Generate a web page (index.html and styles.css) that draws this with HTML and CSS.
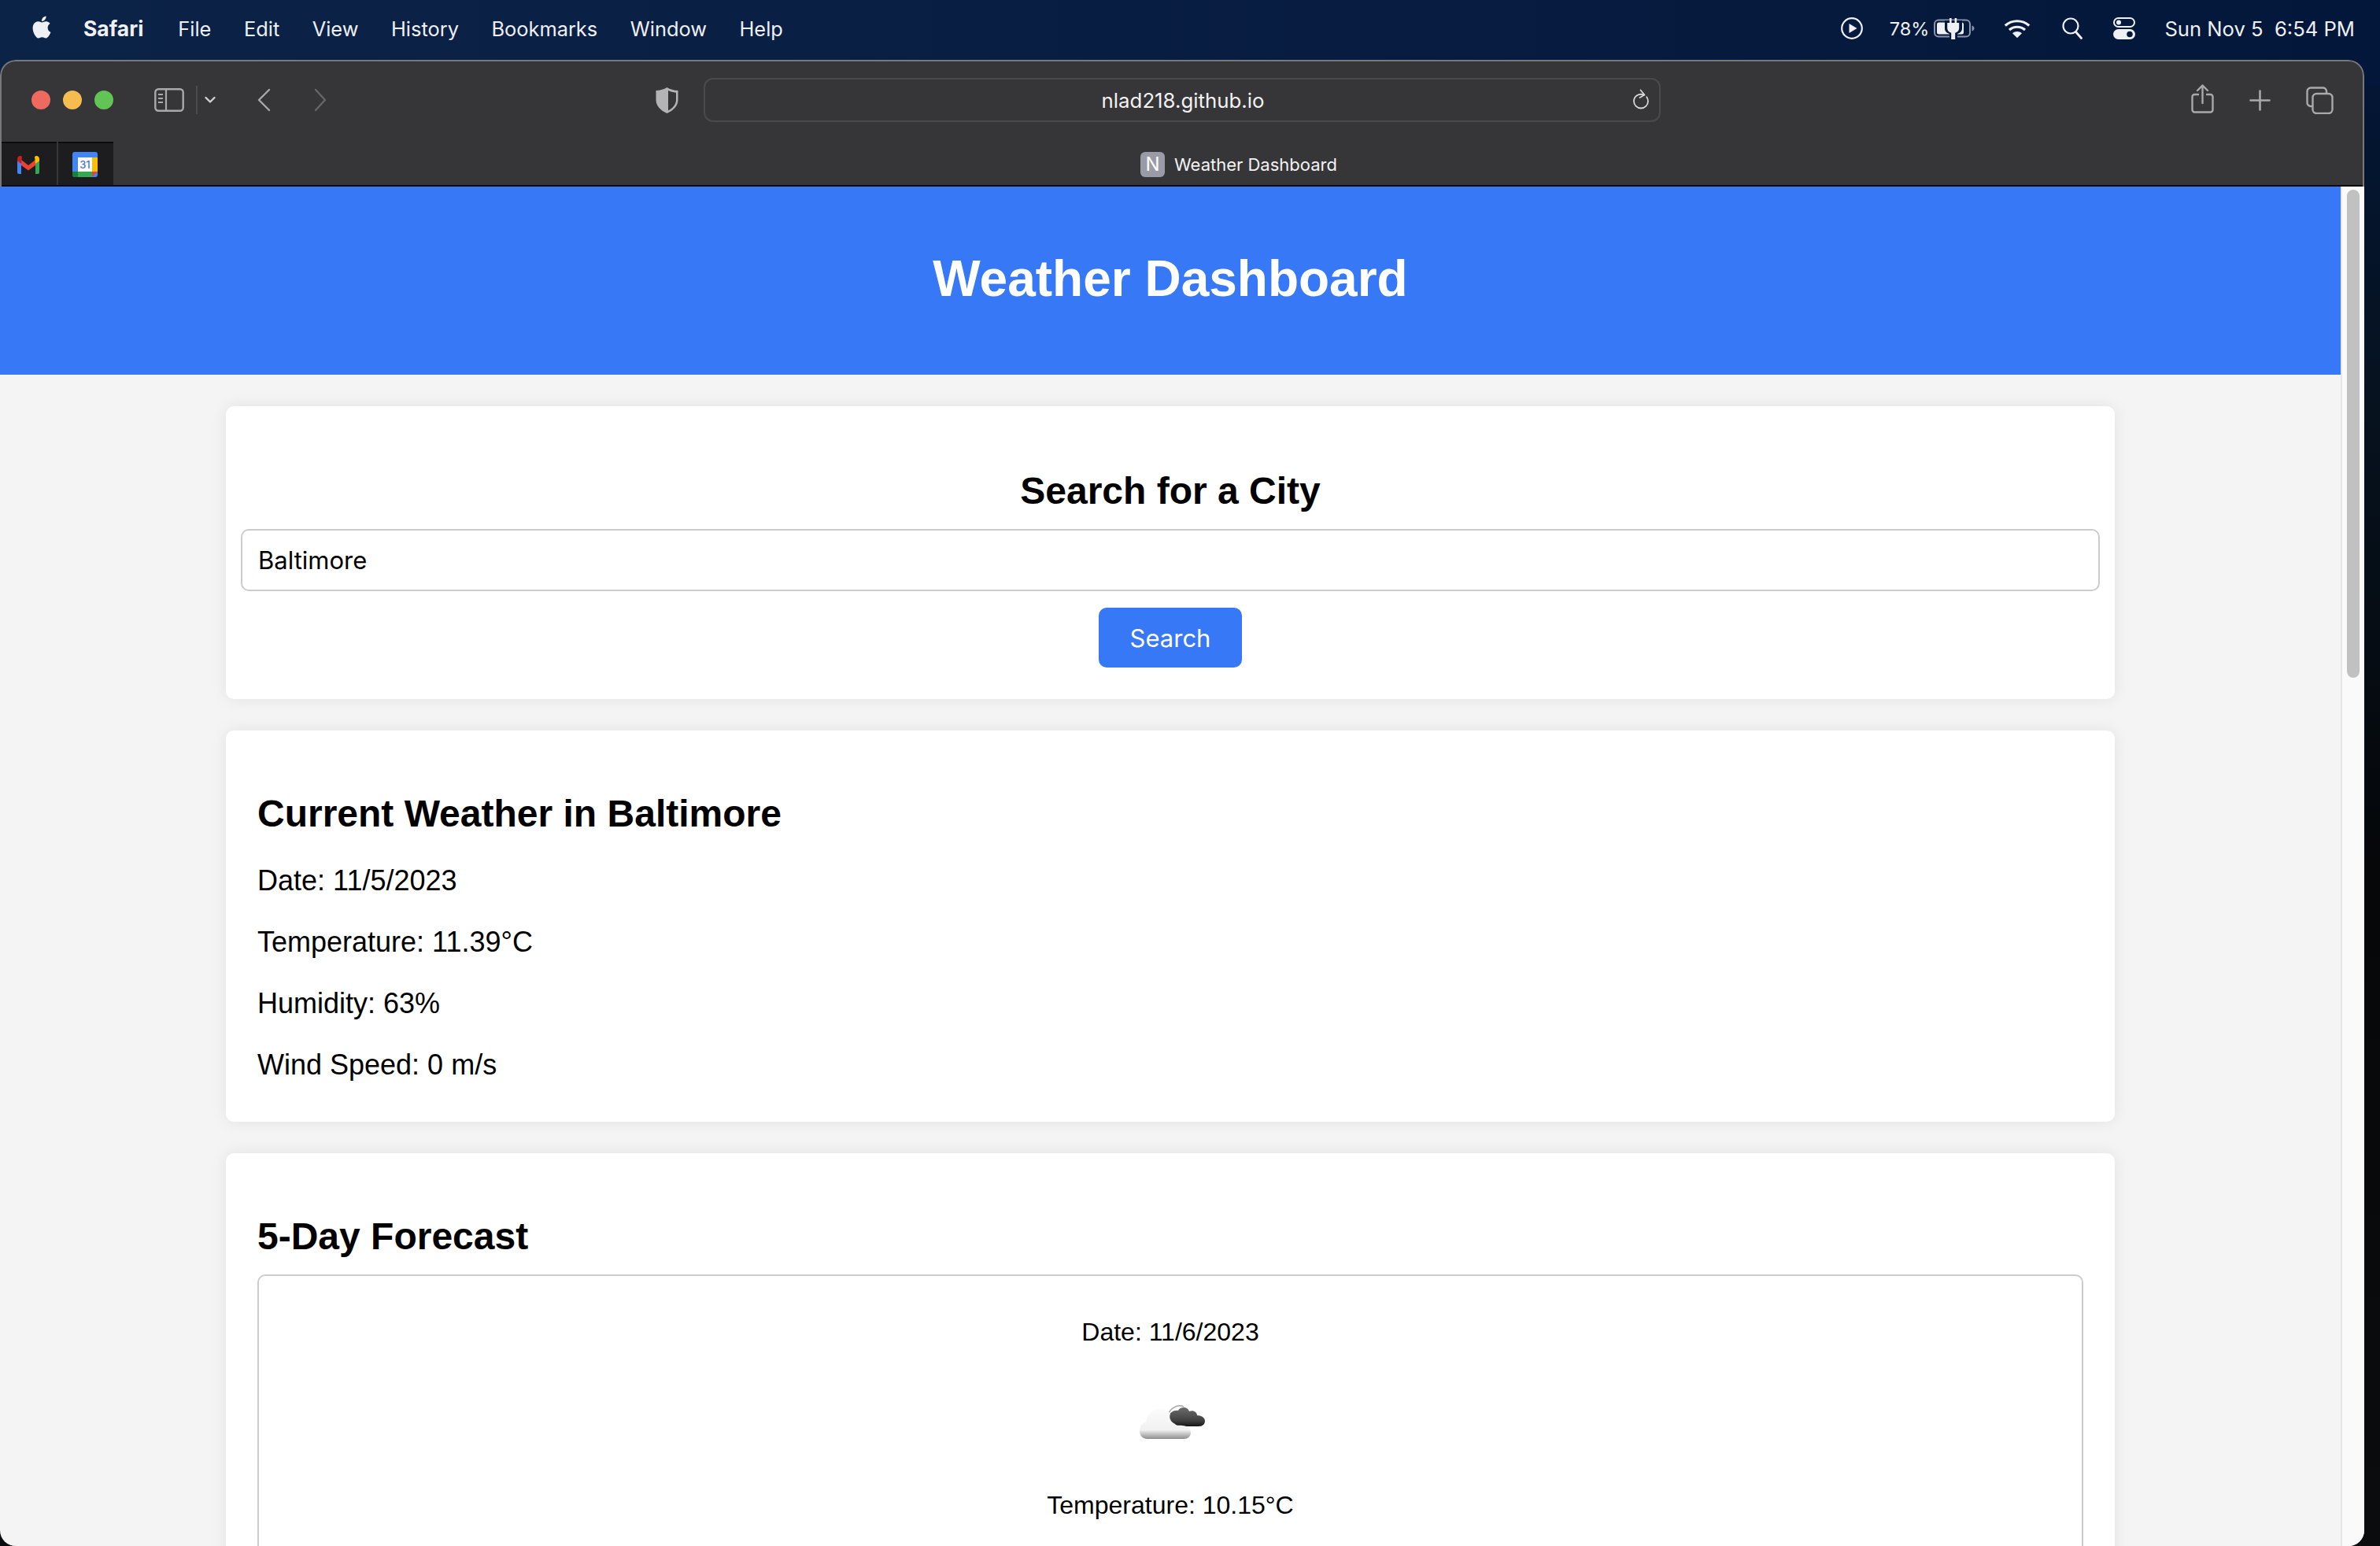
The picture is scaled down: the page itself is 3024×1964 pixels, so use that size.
FILE: index.html

```html
<!DOCTYPE html>
<html lang="en">
<head>
  <meta charset="UTF-8" />
  <title>Weather Dashboard</title>
  <link rel="stylesheet" href="styles.css">
</head>
<body>
  <!-- mac menu bar -->
  <div class="menubar">
    <svg class="apple" viewBox="0 0 24 24"><path fill="#eef0f4" d="M12.152 6.896c-.948 0-2.415-1.078-3.96-1.04-2.04.027-3.91 1.183-4.961 3.014-2.117 3.675-.546 9.103 1.519 12.09 1.013 1.454 2.208 3.09 3.792 3.039 1.52-.065 2.09-.987 3.935-.987 1.831 0 2.35.987 3.96.948 1.637-.026 2.676-1.48 3.676-2.948 1.156-1.688 1.636-3.325 1.662-3.415-.039-.013-3.182-1.221-3.22-4.857-.026-3.04 2.48-4.494 2.597-4.559-1.429-2.09-3.623-2.324-4.39-2.376-2-.156-3.675 1.09-4.61 1.09zM15.53 3.83c.843-1.012 1.4-2.427 1.245-3.83-1.207.052-2.662.805-3.532 1.818-.78.896-1.454 2.338-1.273 3.714 1.338.104 2.715-.688 3.559-1.701"/></svg>
    <span class="menu-item menu-app">Safari</span>
    <span class="menu-item menu-first">File</span>
    <span class="menu-item">Edit</span>
    <span class="menu-item">View</span>
    <span class="menu-item">History</span>
    <span class="menu-item">Bookmarks</span>
    <span class="menu-item">Window</span>
    <span class="menu-item">Help</span>

    <div class="status">
      <svg class="st-play" viewBox="0 0 28 28"><circle cx="14" cy="14" r="12.8" fill="none" stroke="#eef0f4" stroke-width="2.2"/><path fill="#eef0f4" d="M10.5 8l10 6-10 6z"/></svg>
      <span class="st-batt-text">78%</span>
      <svg class="st-batt" viewBox="0 0 52 28"><rect x="1" y="3.5" width="45" height="21" rx="5" fill="none" stroke="#8b94a8" stroke-width="2"/><rect x="4" y="6.5" width="34" height="15" rx="2.5" fill="#eef0f4"/><path fill="#8b94a8" d="M48.5 10.5c2 .6 3 2 3 3.5s-1 2.900-3 3.500z"/><path fill="#03173a" d="M14 4h22v10c0 4-3 6-6 7v6h-10v-6c-3-1-6-3-6-7z"/><path fill="#eef0f4" d="M20 1h2.600v6h4V1h2.600v6h3v7c0 3-2.400 5-5 5.800V28h-5v-8.200c-2.600-.8-5-2.800-5-5.800V7h3z"/></svg>
      <svg class="st-wifi" viewBox="0 0 34 24"><path fill="none" stroke="#eef0f4" stroke-width="3.200" d="M1.800 8.500C10.500.8 23.500.8 32.200 8.500M7 14c5.800-5 14.200-5 20 0"/><path fill="#eef0f4" d="M11 18.200c3.500-2.800 8.500-2.800 12 0l-6 6z"/></svg>
      <svg class="st-search" viewBox="0 0 26 28"><circle cx="11" cy="11" r="9.500" fill="none" stroke="#eef0f4" stroke-width="2.200"/><path stroke="#eef0f4" stroke-width="2.800" stroke-linecap="round" d="M17.500 18.500l7 8"/></svg>
      <svg class="st-control" viewBox="0 0 28 28"><rect x="1" y="1" width="26" height="11" rx="5.500" fill="none" stroke="#eef0f4" stroke-width="2"/><circle cx="7" cy="6.500" r="3" fill="#eef0f4"/><rect y="15" width="28" height="13" rx="6.500" fill="#eef0f4"/><circle cx="21" cy="21.500" r="3.800" fill="#03173a"/></svg>
      <span class="clock">Sun Nov 5&nbsp;&nbsp;6:54 PM</span>
    </div>
  </div>

  <div class="window">
    <div class="chrome">
      <div class="toolbar">
        <span class="light light-red"></span>
        <span class="light light-yellow"></span>
        <span class="light light-green"></span>

        <svg class="tb-sidebar" viewBox="0 0 38 30"><rect x="1.300" y="1.300" width="35.400" height="27.400" rx="4" fill="none" stroke="#a9a9ab" stroke-width="2.400"/><path stroke="#a9a9ab" stroke-width="2.200" d="M15 1.500v27M5 8h6M5 13h6M5 18h6"/></svg>
        <span class="tb-divider"></span>
        <svg class="tb-chevron" viewBox="0 0 14 10"><path fill="none" stroke="#d0d0d2" stroke-width="2.400" stroke-linecap="round" stroke-linejoin="round" d="M1.500 2l5.500 5.500L12.500 2"/></svg>
        <svg class="tb-back" viewBox="0 0 19 30"><path fill="none" stroke="#a9a9ab" stroke-width="2.400" stroke-linecap="round" stroke-linejoin="round" d="M16 2L3 15l13 13"/></svg>
        <svg class="tb-forward" viewBox="0 0 18 30"><path fill="none" stroke="#66666a" stroke-width="2.400" stroke-linecap="round" stroke-linejoin="round" d="M3 2l12 13L3 28"/></svg>
        <svg class="tb-shield" viewBox="0 0 29 33"><path fill="#b4b4b6" d="M14.500 0c4 2.500 8.500 3.800 14 4v12c0 7.500-6 13.500-14 17-8-3.500-14-9.500-14-17V4c5.500-.2 10-1.500 14-4z"/><path fill="#363638" d="M16 4c3 1.500 6 2.300 10 2.700V16c0 5.800-4.300 10.500-10 13.500z"/></svg>

        <div class="address">
          <span class="address-text">nlad218.github.io</span>
          <svg class="tb-reload" viewBox="0 0 22 27"><path fill="none" stroke="#d6d6d8" stroke-width="1.800" stroke-linecap="round" d="M15 7.500c-7-2.500-13 2-13 8 0 5 4 9 9 9s9-4 9-9c0-2-.7-3.800-1.800-5.200"/><path fill="none" stroke="#d6d6d8" stroke-width="1.800" stroke-linecap="round" stroke-linejoin="round" d="M10.500 1.500l5 6-6 3.500"/></svg>
        </div>

        <svg class="tb-share" viewBox="0 0 29 37"><path fill="none" stroke="#a9a9ab" stroke-width="2.400" stroke-linecap="round" stroke-linejoin="round" d="M9 13H4.500a3 3 0 0 0-3 3v16.500a3 3 0 0 0 3 3h20a3 3 0 0 0 3-3V16a3 3 0 0 0-3-3H20M14.500 24V1.500M8 8l6.500-6.500L21 8"/></svg>
        <svg class="tb-plus" viewBox="0 0 27 27"><path stroke="#a9a9ab" stroke-width="2.600" stroke-linecap="round" d="M13.500 1.500v24M1.500 13.500h24"/></svg>
        <svg class="tb-tabs" viewBox="0 0 35 35"><rect x="8.500" y="9" width="25" height="25" rx="5" fill="none" stroke="#a9a9ab" stroke-width="2.400"/><path fill="none" stroke="#a9a9ab" stroke-width="2.400" d="M8 25H6a4.500 4.500 0 0 1-4.500-4.500V6A4.500 4.500 0 0 1 6 1.500h15A4.500 4.500 0 0 1 26 6v2.500"/></svg>
      </div>

      <div class="tabbar">
        <div class="pinned">
          <svg class="pin-icon" viewBox="0 0 30 24"><path fill="#4285f4" d="M1 5h5v19H3a2 2 0 0 1-2-2z"/><path fill="#34a853" d="M24 5h5v17a2 2 0 0 1-2 2h-3z"/><path fill="#ea4335" d="M6 6l9 7 9-7v7l-9 6.500L6 13z"/><path fill="#c5221f" d="M1 5c0-4 4-5 6-3l-1 9-5-3.500z"/><path fill="#fbbc04" d="M29 5c0-4-4-5-6-3l1 9 5-3.500z"/></svg>
        </div>
        <div class="pinned">
          <svg class="pin-icon pin-cal" viewBox="0 0 32 32"><rect width="32" height="32" rx="3" fill="#4285f4"/><path fill="#fbbc04" d="M25 7h7v18h-7z"/><path fill="#34a853" d="M7 25h18v7H7z"/><path fill="#188038" d="M0 25h7v7H3a3 3 0 0 1-3-3z"/><path fill="#ea4335" d="M25 25h7l-7 7z"/><rect x="7" y="7" width="18" height="18" fill="#fff"/><text class="cal-num" x="16" y="21">31</text></svg>
        </div>
        <div class="tab-title">
          <span class="favicon">N</span>
          <span>Weather Dashboard</span>
        </div>
      </div>
    </div>

    <div class="viewport">
      <div class="page">
        <header class="page-header">
          <h1>Weather Dashboard</h1>
        </header>

        <main class="container">
          <section class="card card-search">
            <h2>Search for a City</h2>
            <input class="city-input" type="text" value="Baltimore">
            <button class="search-btn">Search</button>
          </section>

          <section class="card card-current">
            <h2>Current Weather in Baltimore</h2>
            <p>Date: 11/5/2023</p>
            <p>Temperature: 11.39°C</p>
            <p>Humidity: 63%</p>
            <p>Wind Speed: 0 m/s</p>
          </section>

          <section class="card">
            <h2>5-Day Forecast</h2>
            <div class="forecast-day">
              <p>Date: 11/6/2023</p>
              <svg class="weather-icon" viewBox="-6 0 90 46">
                <defs>
                  <linearGradient id="cloudLight" x1="0" y1="0" x2="0" y2="1">
                    <stop offset="0" stop-color="#fbfbfb"/>
                    <stop offset="0.7" stop-color="#f1f1f1"/>
                    <stop offset="0.88" stop-color="#b5b5b5"/>
                    <stop offset="1" stop-color="#8d8d8d"/>
                  </linearGradient>
                  <linearGradient id="cloudDark" x1="0" y1="0" x2="0" y2="1">
                    <stop offset="0" stop-color="#6c6c6c"/>
                    <stop offset="0.7" stop-color="#404040"/>
                    <stop offset="1" stop-color="#141414"/>
                  </linearGradient>
                </defs>
                <path fill="none" stroke="#a8a8a8" stroke-width="1.500" d="M36 16c1-9 12-16 20-12"/>
                <path fill="url(#cloudDark)" d="M44 27c-5-1-8-5-7-10 1-6 7-9 12-8 2-5 12-6 14 1 5-2 10 1 10 5 5 0 10 3 10 7 0 5-4 7-8 7H50c-3 0-5-1-6-2z"/>
                <path fill="url(#cloudLight)" d="M10 45C4 45 0 41 0 35c0-6 3-10 8-11 1-10 8-17 18-17 6 0 10 2 13 6-2 5 0 10 6 13 3 3 6 1 9 2 7 0 11 5 11 9 0 5-4 8-9 8z"/>
              </svg>
              <p>Temperature: 10.15°C</p>
            </div>
          </section>
        </main>
      </div>

      <div class="scrollbar">
        <div class="scroll-thumb"></div>
      </div>
    </div>
  </div>
</body>
</html>
```

FILE: styles.css

```css
html, body {
  height: 100%;
}
body {
  margin: 0;
  height: 1964px;
  overflow: hidden;
  display: flex;
  flex-direction: column;
  font-family: 'Liberation Sans', Arial, sans-serif;
  background:
    linear-gradient(90deg, #0c2348, #03173a) top / 100% 110px no-repeat,
    linear-gradient(180deg, #03173a 0, #06121f 500px, #050709 1100px, #0a0c0e 1964px);
}

/* menu bar */
.menubar {
  height: 76px;
  box-sizing: border-box;
  padding: 0 0 4px 40px;
  flex: none;
  display: flex;
  align-items: center;
  font-family: Inter, sans-serif;
  font-size: 25.4px;
  color: #eef0f4;
}
.apple {
  width: 28px;
  height: 33px;
  margin-left: -1px;
  margin-top: -4px;
}
.menu-item {
  margin-left: 41.5px;
}
.menu-app {
  margin-left: 39px;
  font-size: 26.5px;
  font-weight: 700;
}
.menu-first {
  margin-left: 44px;
}
.status {
  margin-left: auto;
  padding-right: 32px;
  display: flex;
  align-items: center;
}
.st-play {
  width: 28px;
  height: 28px;
}
.st-batt-text {
  margin-left: 34px;
  font-size: 23.5px;
}
.st-batt {
  width: 52px;
  height: 28px;
  margin-left: 6px;
}
.st-wifi {
  width: 34px;
  height: 24px;
  margin-left: 37px;
}
.st-search {
  width: 26px;
  height: 28px;
  margin-left: 40px;
}
.st-control {
  width: 28px;
  height: 28px;
  margin-left: 39px;
}
.clock {
  margin-left: 37px;
  font-size: 25.6px;
}

/* browser window */
.window {
  flex: 1;
  min-height: 0;
  width: 3004px;
  display: flex;
  flex-direction: column;
  border-radius: 20px;
  overflow: hidden;
}
.chrome {
  flex: none;
  background: #363638;
  border: 2px solid #77787b;
  border-bottom: 0;
  border-radius: 20px 20px 0 0;
  box-shadow: inset 0 -2px 0 #0c0c0e;
}
.toolbar {
  height: 102px;
  box-sizing: border-box;
  display: flex;
  align-items: center;
  padding: 0 0 4px 38px;
}
.toolbar svg {
  flex: none;
}
.light {
  width: 24px;
  height: 24px;
  border-radius: 50%;
  margin-right: 16px;
}
.light-red { background: #ee6a5f; }
.light-yellow { background: #f5bd4f; }
.light-green { background: #61c454; }

.tb-sidebar { width: 38px; height: 30px; margin-left: 36px; }
.tb-divider { width: 2px; height: 36px; margin-left: 15px; background: #4c4c4e; }
.tb-chevron { width: 14px; height: 10px; margin-left: 9px; }
.tb-back { width: 19px; height: 30px; margin-left: 52px; }
.tb-forward { width: 18px; height: 30px; margin-left: 53px; }
.tb-shield { width: 29px; height: 33px; margin-left: 417px; }

.address {
  width: 1216px;
  height: 56px;
  box-sizing: border-box;
  margin-left: 32px;
  padding-left: 2px;
  position: relative;
  display: flex;
  align-items: center;
  justify-content: center;
  border: 2px solid #4a4a4c;
  border-radius: 12px;
  font-family: Inter, sans-serif;
  font-size: 25.8px;
  color: #f2f2f3;
}
.tb-reload {
  position: absolute;
  right: 12px;
  top: 12px;
  width: 22px;
  height: 27px;
}
.tb-share { width: 29px; height: 37px; margin-left: 674px; margin-top: -3px; }
.tb-plus { width: 27px; height: 27px; margin-left: 45px; }
.tb-tabs { width: 35px; height: 35px; margin-left: 45px; }

.tabbar {
  height: 57px;
  display: flex;
  padding-bottom: 2px;
  box-sizing: border-box;
}
.pinned {
  width: 70px;
  box-sizing: border-box;
  padding-right: 3px;
  margin-right: 2px;
  background: #1d1d1f;
  border-top: 2px solid #0c0c0e;
  display: flex;
  align-items: center;
  justify-content: center;
}
.pin-icon {
  width: 30px;
  height: 24px;
}
.pin-cal {
  width: 32px;
  height: 32px;
}
.cal-num {
  font-family: Inter, sans-serif;
  font-size: 13px;
  font-weight: 500;
  fill: #4b72d0;
  text-anchor: middle;
}
.tab-title {
  flex: 1;
  display: flex;
  align-items: center;
  justify-content: center;
  gap: 12px;
  padding-top: 2px;
  font-family: Inter, sans-serif;
  font-size: 22px;
  color: #f2f2f3;
}
.favicon {
  width: 31px;
  height: 32px;
  border-radius: 6px;
  background: #9b9ba8;
  color: #fff;
  font-size: 24px;
  text-align: center;
  line-height: 32px;
}

/* the page itself */
.viewport {
  flex: 1;
  min-height: 0;
  display: flex;
  background: #f4f4f4;
}
.page {
  flex: 1;
  min-width: 0;
  overflow: hidden;
}
.page-header {
  height: 239px;
  background-color: #3778f6;
  color: white;
  text-align: center;
}
h1 {
  margin: 0;
  padding-top: 80px;
  font-size: 64px;
  line-height: 74px;
}
.container {
  width: 2400px;
  margin: 40px auto 0;
}
.card {
  background: white;
  border-radius: 10px;
  box-shadow: 0 0 20px rgba(0, 0, 0, 0.08);
  padding: 78px 40px 40px;
  margin-bottom: 40px;
}
h2 {
  margin: 0 0 21px;
  font-size: 48px;
  line-height: 55px;
}
.card-search {
  padding: 80px 19px 40px;
  text-align: center;
}
.city-input {
  display: block;
  width: 100%;
  height: 79px;
  box-sizing: border-box;
  border: 2px solid #ccc;
  border-radius: 10px;
  padding: 0 20px;
  font-family: Inter, sans-serif;
  font-size: 31px;
  color: #000;
  outline: none;
}
.search-btn {
  width: 182px;
  height: 76px;
  margin-top: 21px;
  border: none;
  border-radius: 10px;
  background-color: #3778f6;
  color: white;
  font-family: Inter, sans-serif;
  font-size: 31px;
  vertical-align: top;
}
.card p {
  margin: 37px 0 0;
  font-size: 36px;
  line-height: 41px;
}
.card-current {
  padding-bottom: 52px;
}
.card-current h2 {
  margin-bottom: 0;
}
.forecast-day {
  height: 600px;
  border: 2px solid #ccc;
  border-radius: 10px;
  text-align: center;
}
.card .forecast-day p {
  margin-top: 52px;
  font-size: 32px;
  line-height: 38px;
}
.weather-icon {
  display: block;
  width: 90px;
  height: 46px;
  margin: 72px auto 64px;
}
.scrollbar {
  width: 28px;
  flex: none;
  border-left: 2px solid #e6e6e6;
  background: #fafafa;
}
.scroll-thumb {
  width: 16px;
  height: 620px;
  margin: 4px 0 0 6px;
  border-radius: 8px;
  background: #c1c1c1;
}
```
